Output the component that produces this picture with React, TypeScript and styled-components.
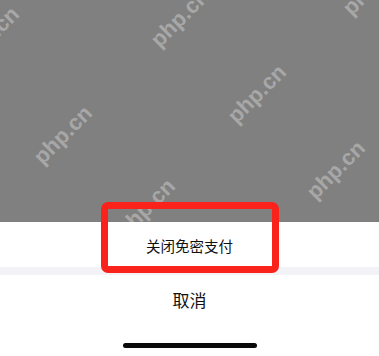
import React from "react";
import styled, { createGlobalStyle } from "styled-components";

const Global = createGlobalStyle`
  html, body { margin: 0; padding: 0; background: #ffffff; }
  body { font-family: "Noto Sans CJK SC", "Noto Sans", sans-serif; }
`;

const Screen = styled.div`
  position: relative;
  width: 379px;
  height: 356px;
  overflow: hidden;
  display: flex;
  flex-direction: column;
  background: #ffffff;
`;

const Backdrop = styled.div`
  height: 222px;
  flex: none;
  background: #808080;
`;

const Sheet = styled.div`
  flex: 1;
  display: flex;
  flex-direction: column;
  background: #ffffff;
`;

const ActionRow = styled.div`
  height: 45px;
  display: flex;
  align-items: center;
  justify-content: center;
  font-size: 14.5px;
  color: #111111;
  padding-top: 2px;
  box-sizing: border-box;
`;

const Divider = styled.div`
  height: 8px;
  background: #f2f2f7;
`;

const CancelRow = styled.div`
  height: 48px;
  display: flex;
  align-items: center;
  justify-content: center;
  font-size: 17px;
  color: #111111;
`;

const HomeArea = styled.div`
  flex: 1;
  display: flex;
  justify-content: center;
  padding-top: 20px;
  box-sizing: border-box;
`;

const HomeBar = styled.div`
  width: 134px;
  height: 5px;
  border-radius: 3px;
  background: #0a0a0a;
`;

const Highlight = styled.div`
  position: absolute;
  left: 101px;
  top: 202px;
  width: 178px;
  height: 71px;
  box-sizing: border-box;
  border: 7px solid #f9231b;
  border-radius: 7px;
  pointer-events: none;
`;

const Watermark = styled.span<{ $x: number; $y: number }>`
  position: absolute;
  left: ${(p) => p.$x}px;
  top: ${(p) => p.$y}px;
  transform: translate(-50%, -50%) rotate(-45deg);
  font-family: "Liberation Sans", Arial, sans-serif;
  font-weight: 700;
  font-size: 22px;
  color: rgba(255, 255, 255, 0.32);
  white-space: nowrap;
  pointer-events: none;
`;

const marks: [number, number][] = [
  [-10, 36],
  [180, 18],
  [372, -14],
  [257, 94],
  [63, 135],
  [336, 170],
  [146, 208],
];

export default function App() {
  return (
    <>
      <Global />
      <Screen>
        <Backdrop />
        <Sheet>
          <ActionRow>关闭免密支付</ActionRow>
          <Divider />
          <CancelRow>取消</CancelRow>
          <HomeArea>
            <HomeBar />
          </HomeArea>
        </Sheet>
        {marks.map(([x, y], i) => (
          <Watermark key={i} $x={x} $y={y}>
            php.cn
          </Watermark>
        ))}
        <Highlight />
      </Screen>
    </>
  );
}
